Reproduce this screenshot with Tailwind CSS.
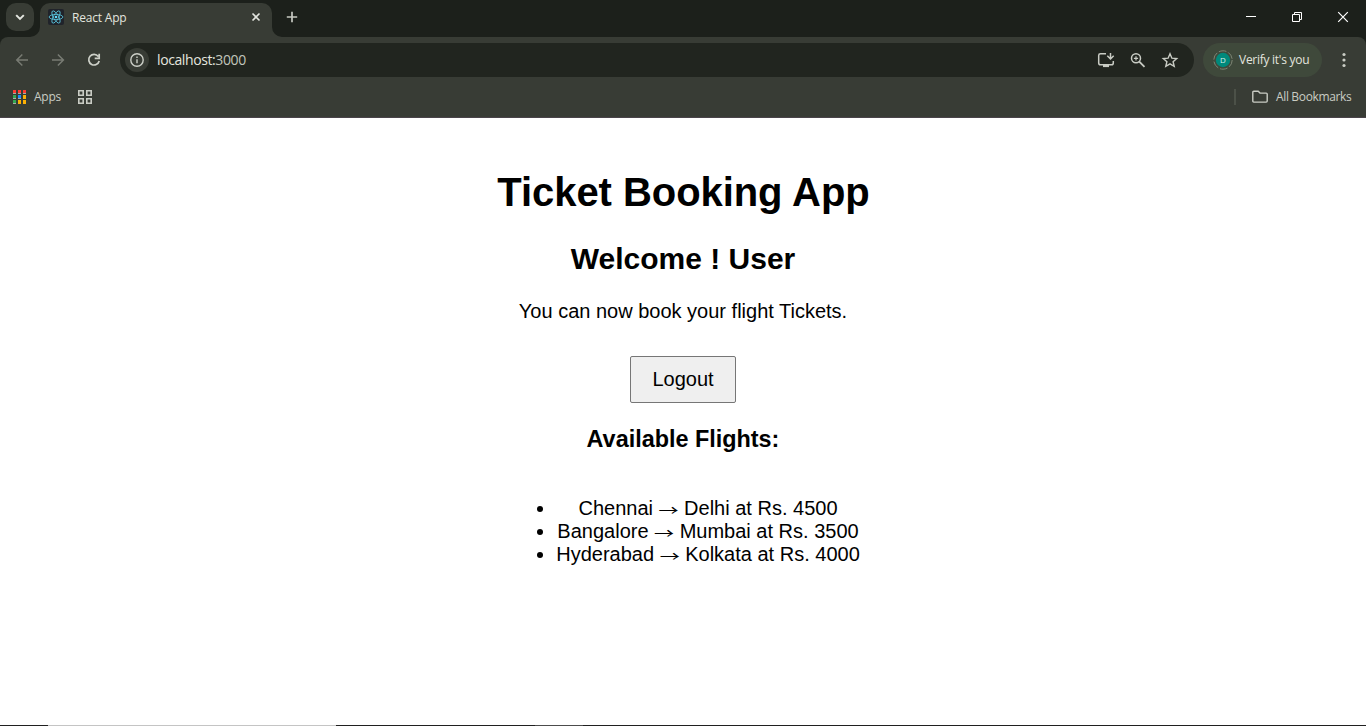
<!DOCTYPE html>
<html lang="en">
<head>
<meta charset="utf-8">
<title>React App</title>
<script src="https://cdn.jsdelivr.net/npm/@tailwindcss/browser@4"></script>
</head>
<body class="w-[1366px] h-[726px] overflow-hidden bg-white flex flex-col font-['Open_Sans',sans-serif] text-[#e3e5df]">
<div class="h-[37px] shrink-0 bg-[#1c201b] flex">
  <div class="ml-1.5 mt-[3px] size-7 rounded-[10px] bg-[#383c35] flex items-center justify-center">
    <svg class="size-7" viewBox="0 0 28 28" fill="none" stroke="#e3e5df" stroke-width="2"><path d="M10.2 12.100l3.800 3.800 3.800-3.800"/></svg>
  </div>
  <div class="flex items-end -ml-[4px]">
    <svg class="size-[10px]" viewBox="0 0 10 10"><path d="M10 0v10H0A10 10 0 0 0 10 0z" fill="#383c35"/></svg>
    <div class="w-[232px] h-[34px] rounded-t-[10px] bg-[#383c35] flex items-start">
      <svg class="ml-2 mt-[6px] size-4" viewBox="0 0 16 16"><rect width="16" height="16" rx="2" fill="#20232a"/><g fill="none" stroke="#58c4dc" stroke-width=".85"><ellipse cx="8" cy="8" rx="6.9" ry="2.6"/><ellipse cx="8" cy="8" rx="6.9" ry="2.6" transform="rotate(60 8 8)"/><ellipse cx="8" cy="8" rx="6.9" ry="2.6" transform="rotate(120 8 8)"/></g><circle cx="8" cy="8" r="1.3" fill="#61dafb"/></svg>
      <span class="ml-2 mt-[7px] w-[178px] text-[12px] leading-4 tracking-[-0.2px]">React App</span>
      <svg class="mt-[7px] size-4 shrink-0" viewBox="0 0 16 16" stroke="#e3e5df" stroke-width="1.6"><path d="M2.500 3.500l7 7M9.500 3.500l-7 7"/></svg>
    </div>
    <svg class="size-[10px]" viewBox="0 0 10 10"><path d="M0 0v10h10A10 10 0 0 1 0 0z" fill="#383c35"/></svg>
  </div>
  <svg class="ml-[3px] mt-[10px] size-[14px]" viewBox="0 0 14 14" stroke="#c6c9c1" stroke-width="1.7"><path d="M7 1.8v10.4M1.8 7h10.4"/></svg>
  <svg class="ml-auto w-[138px] h-[37px]" viewBox="0 0 138 37" fill="none" stroke="#fff" stroke-width="1"><path d="M18 16.5h10"/><path d="M64.5 14.500h7v7h-7zM66.500 14.500v-2h7v7h-2"/><path d="M110.200 12.200l9.600 9.600M119.800 12.200l-9.600 9.600" stroke-width="1.200"/></svg>
</div>
<div class="bg-[#1c201b] shrink-0">
<div class="h-[81px] rounded-t-[8px] bg-[#383c35] border-b border-[#4a444a]">
  <div class="h-[46px] flex items-center">
    <svg class="w-[120px] h-[46px] shrink-0" viewBox="0 0 120 46" fill="none" stroke-width="1.500"><g stroke="#787b73"><path d="M28 23H17M22.300 17.500L16.800 23l5.500 5.500"/><path d="M52 23h11M57.900 17.500L63.400 23l-5.500 5.500"/></g><path d="M98.300 19.500A5.300 5.300 0 1 0 99.200 24M99.200 16.800v4.500h-4.500" stroke="#cdd0c8" stroke-width="1.700"/></svg>
    <div class="w-[1074px] h-[34px] rounded-full bg-[#21251f] flex items-center">
      <div class="ml-[5px] size-6 rounded-full bg-[#383c35] flex items-center justify-center"><svg class="size-4" viewBox="0 0 16 16" fill="none" stroke="#cdd0c8" stroke-width="1.400"><circle cx="8" cy="8" r="6.200"/><path d="M8 7.200v4M8 4.500v1.500"/></svg></div>
      <span class="ml-2 text-[14px] leading-5 tracking-[-0.4px]">localhost:<span class="text-[#c1c5bc]">3000</span></span>
      <svg class="ml-auto w-[100px] h-[34px]" viewBox="0 0 100 34" fill="none" stroke="#c9ccc4" stroke-width="1.500"><path d="M12 10.800H6.500q-1.800 0-1.800 1.600v7.500q0 1.800 1.800 1.800H17.500q1.800 0 1.800-1.800V18M16.500 10v5.500M13.300 12.800l3.200 3.200 3.200-3.200"/><path d="M9 23h6" stroke-width="2.200"/><circle cx="42" cy="15.300" r="4.500"/><path d="M45.300 18.600l5.200 5.200" stroke-width="1.800"/><path d="M42 13.200v4.200M39.900 15.300h4.200" stroke-width="1.200"/><path d="M76 10.800l1.900 4.400 4.800.4-3.600 3.100 1.100 4.700-4.200-2.500-4.200 2.500 1.100-4.700-3.600-3.100 4.800-.4z" stroke-width="1.400"/></svg>
    </div>
    <div class="ml-[9px] w-[119px] h-[34px] rounded-full bg-[#3f493b] flex items-center">
      <div class="ml-[10px] size-5 grid place-items-center">
        <svg class="col-start-1 row-start-1 size-5" viewBox="0 0 20 20" fill="none"><circle cx="10" cy="10" r="9.200" stroke="#7d8675" stroke-width="1" stroke-dasharray="7.700 2"/><circle cx="10" cy="10" r="7.200" fill="#00897b"/></svg>
        <span class="col-start-1 row-start-1 text-[8px] leading-none text-[#d8f0eb]">D</span>
      </div>
      <span class="ml-[6px] text-[12px] leading-4 tracking-[-0.27px] whitespace-nowrap">Verify it's you</span>
    </div>
    <svg class="ml-[14px] size-4" viewBox="0 0 16 16" fill="#c9ccc4"><circle cx="8" cy="2.500" r="1.600"/><circle cx="8" cy="8" r="1.600"/><circle cx="8" cy="13.500" r="1.600"/></svg>
  </div>
  <div class="h-7 flex items-center text-[12px] leading-4 text-[#c9ccc4]">
    <svg class="ml-[13px] w-[14px] h-[14px]" viewBox="0 0 14 14"><path fill="#a9aaa5" d="M0 3h3v1H0zM5 3h3v1H5zM10 3h3v1h-3zM0 8h3v1H0zM5 8h3v1H5zM10 8h3v1h-3zM0 13h3v1H0zM5 13h3v1H5zM10 13h3v1h-3z"/><path fill="#ff3b30" d="M0 0h3v3H0zM5 0h3v3H5zM10 0h3v3h-3z"/><path fill="#34a853" d="M0 5h3v3H0zM0 10h3v3H0z"/><path fill="#1a8cff" d="M5 5h3v3H5z"/><path fill="#fbb004" d="M10 5h3v4h-3zM5 10h3v4H5zM10 10h3v4h-3z"/></svg>
    <span class="ml-[7px] w-[44px] tracking-[-0.25px]">Apps</span>
    <svg class="size-[14px]" viewBox="0 0 14 14" fill="none" stroke="#c9ccc4" stroke-width="1.600"><path d="M.8.8h4.400v4.400H.8zM8.800.8h4.400v4.400H8.800zM.8 8.800h4.400v4.400H.8zM8.800 8.800h4.400v4.400H8.800z"/></svg>
    <div class="ml-auto w-[2px] h-4 bg-[#4c5148]"></div>
    <svg class="ml-4 w-4 h-[14px]" viewBox="0 0 16 14" fill="none" stroke="#c9ccc4" stroke-width="1.400"><path d="M.8 2.300q0-1 1-1h4.400l1.800 1.800h6.200q1 0 1 1v7q0 1-1 1H1.800q-1 0-1-1z"/></svg>
    <span class="ml-2 mr-[14px] w-[76px] tracking-[-0.35px] whitespace-nowrap">All Bookmarks</span>
  </div>
</div>
</div>
<main class="flex-1 flex flex-col items-center text-black text-[20px] leading-[23px] font-['Liberation_Sans',sans-serif]">
  <h1 class="mt-[51px] ml-px text-[40px] leading-[46px] tracking-[-0.06px] font-bold">Ticket Booking App</h1>
  <h2 class="mt-[27px] text-[30px] leading-[34px] font-bold">Welcome ! User</h2>
  <p class="mt-[24px]">You can now book your flight Tickets.</p>
  <button class="mt-[33px] w-[106px] h-[47px] border border-[#767676] rounded-[2px] bg-[#efefef]">Logout</button>
  <h3 class="mt-[23px] text-[23.4px] leading-[27px] font-bold">Available Flights:</h3>
  <ul class="mt-[44px] ml-[50px] w-[304px] list-disc text-center whitespace-nowrap">
    <li class="h-[23px]">Chennai <span class="inline-block font-['Noto_Sans_CJK_JP',sans-serif] leading-none scale-y-70 translate-y-[2px]">→</span> Delhi at Rs. 4500</li>
    <li class="h-[23px]">Bangalore <span class="inline-block font-['Noto_Sans_CJK_JP',sans-serif] leading-none scale-y-70 translate-y-[2px]">→</span> Mumbai at Rs. 3500</li>
    <li class="h-[23px]">Hyderabad <span class="inline-block font-['Noto_Sans_CJK_JP',sans-serif] leading-none scale-y-70 translate-y-[2px]">→</span> Kolkata at Rs. 4000</li>
  </ul>
</main>
<div class="h-px shrink-0 bg-[#202020] flex"><div class="ml-12 w-72 bg-[#c4c4c4]"></div><div class="ml-[199px] w-12 bg-[#4c4c4c]"></div></div>
</body>
</html>
